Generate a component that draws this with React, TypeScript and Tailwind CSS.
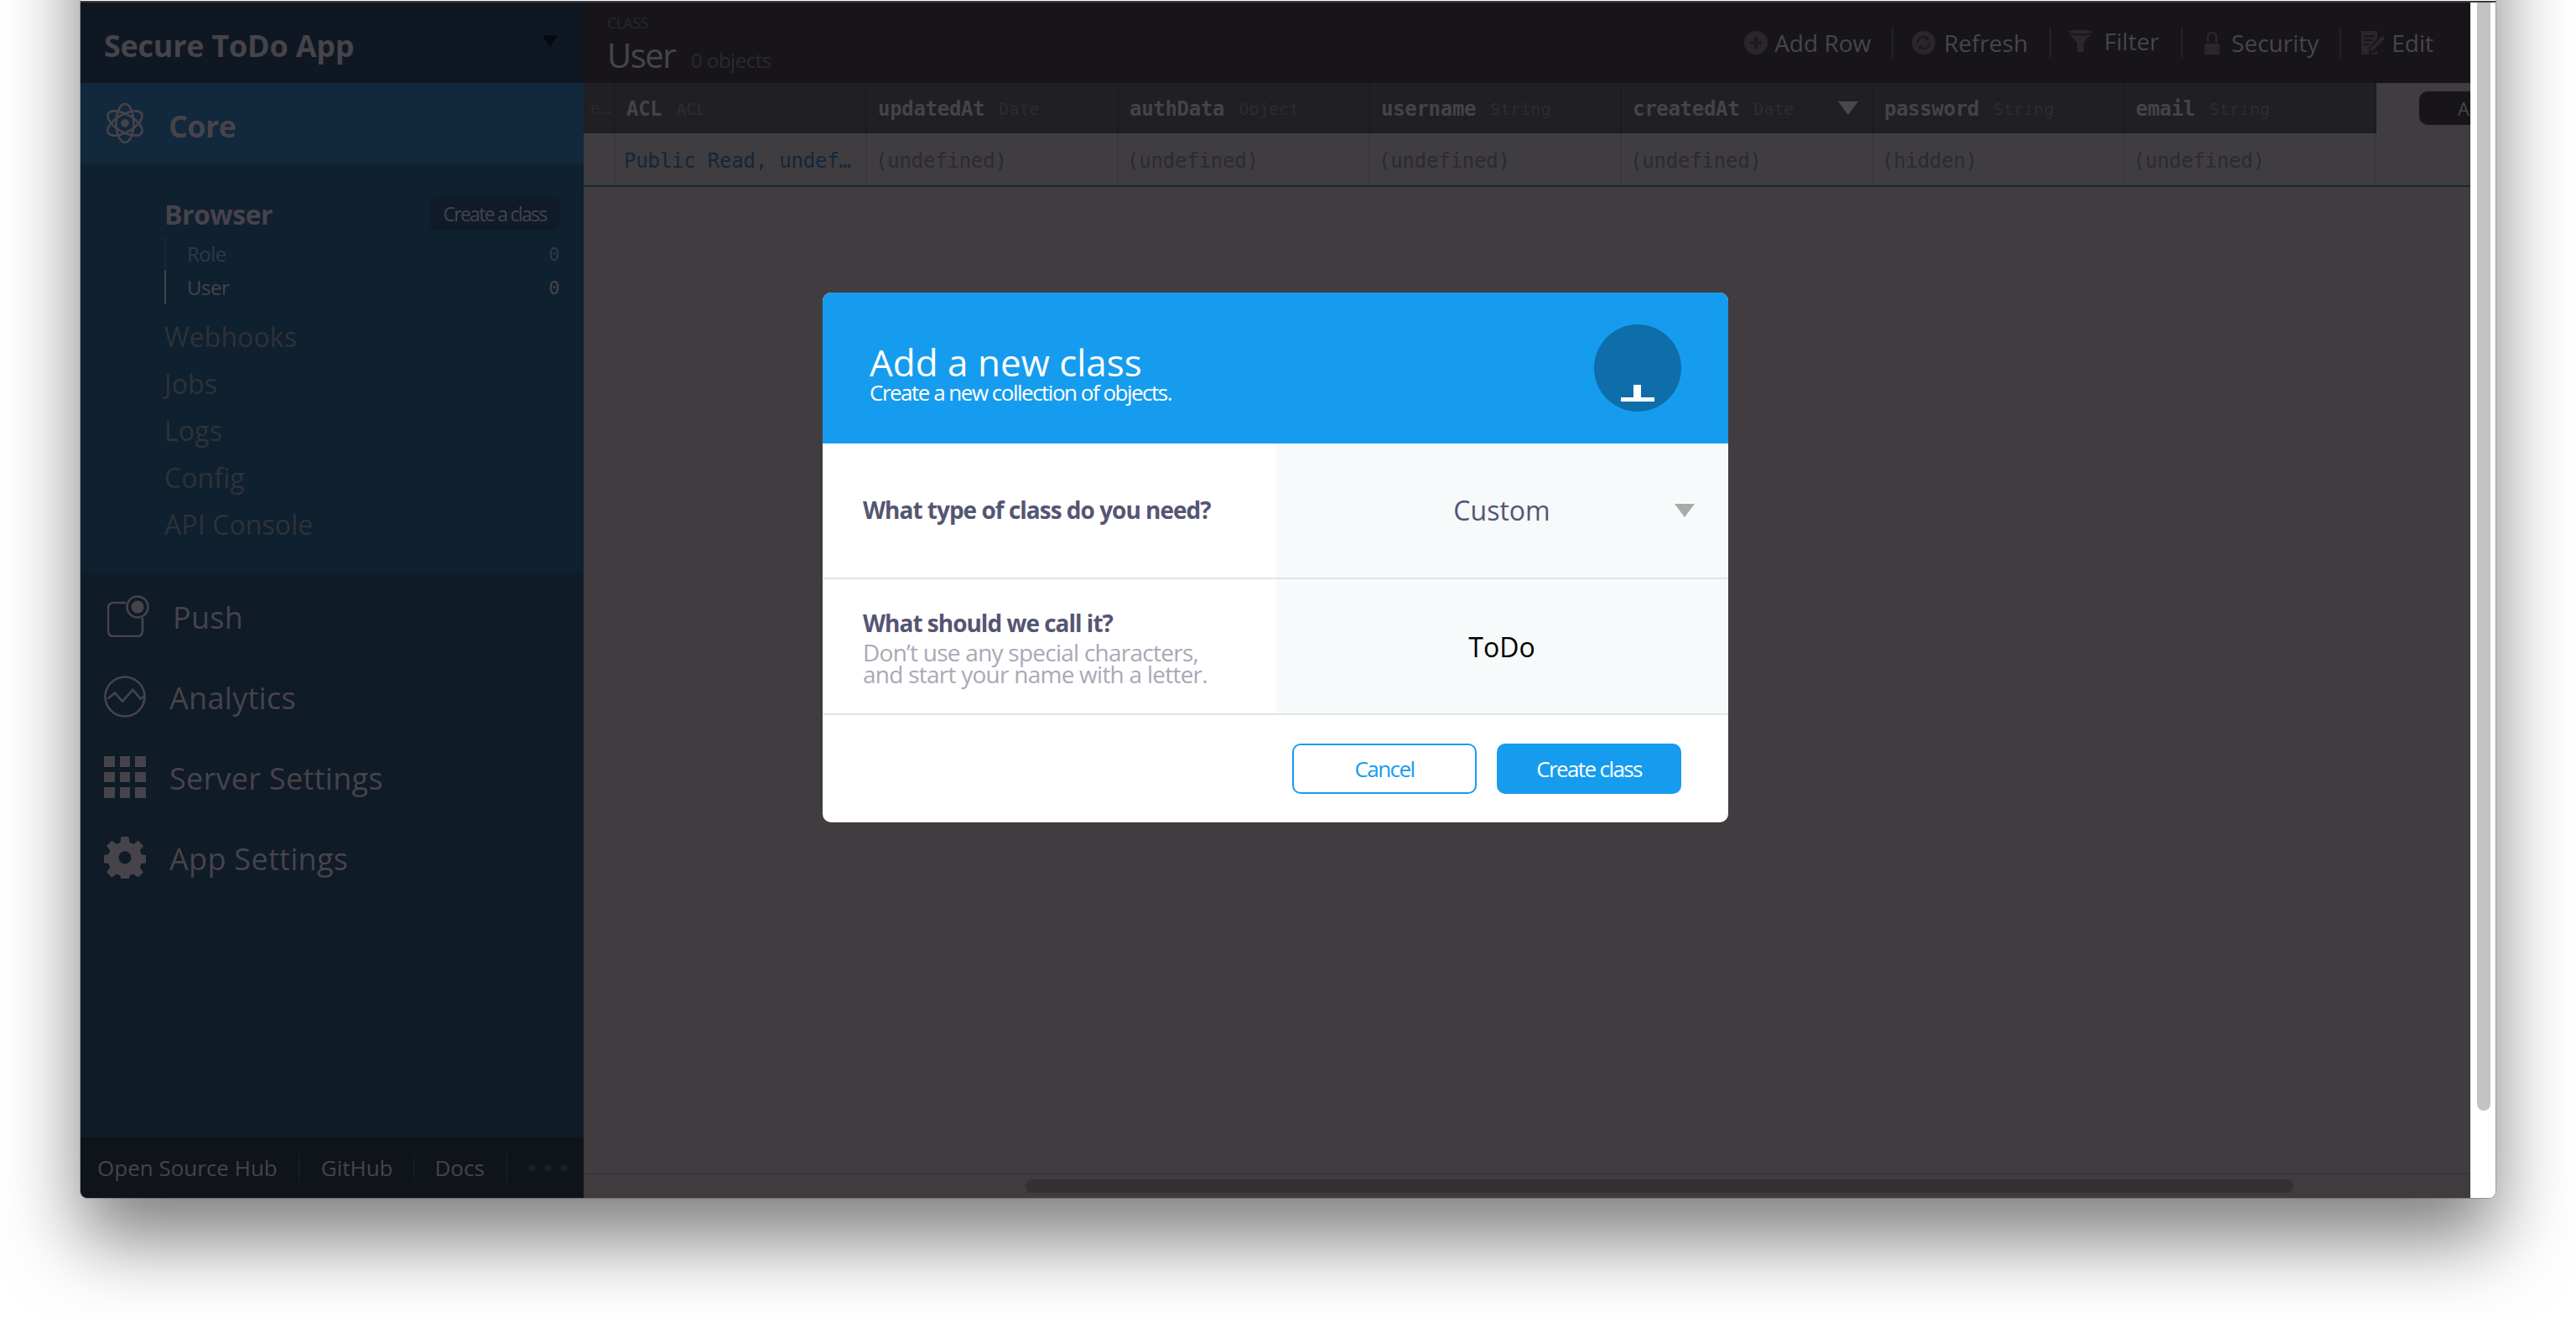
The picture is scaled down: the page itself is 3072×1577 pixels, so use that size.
import React from 'react';

const sans = "font-['Open_Sans','Noto_Sans',sans-serif]";
const mono = "font-['DejaVu_Sans_Mono',monospace]";

function CoreIcon() {
  return (
    <svg width="46" height="50" viewBox="0 0 46 50" fill="none" stroke="#47434a" strokeWidth="2.6">
      <ellipse cx="23" cy="25" rx="10.5" ry="23" />
      <ellipse cx="23" cy="25" rx="10.5" ry="23" transform="rotate(60 23 25)" />
      <ellipse cx="23" cy="25" rx="10.5" ry="23" transform="rotate(-60 23 25)" />
      <circle cx="23" cy="25" r="4.8" fill="#47434a" stroke="none" />
    </svg>
  );
}

function PushIcon() {
  return (
    <svg width="50" height="50" viewBox="0 0 50 50" fill="none" stroke="#47434a" strokeWidth="2.6">
      <path d="M22 9H7a6 6 0 0 0-6 6v28a6 6 0 0 0 6 6h29a6 6 0 0 0 6-6V27" />
      <circle cx="36" cy="14" r="12.5" />
      <circle cx="36" cy="14" r="7.5" fill="#47434a" stroke="none" />
    </svg>
  );
}

function AnalyticsIcon() {
  return (
    <svg width="50" height="50" viewBox="0 0 50 50" fill="none" stroke="#47434a" strokeWidth="2.6">
      <circle cx="25" cy="25" r="23.5" />
      <path d="M4.600 27.500l8.300-6.900 9.100 10 12.400-13.800 9.200 10.700 5.400-3.500" />
    </svg>
  );
}

function GridIcon() {
  return (
    <div className="grid grid-cols-3 gap-[6px] w-[50px] h-[50px]">
      {Array.from({ length: 9 }).map((_, i) => (
        <div key={i} className="bg-[#47434a]" />
      ))}
    </div>
  );
}

function GearIcon() {
  return (
    <svg width="50" height="50" viewBox="0 0 50 50" fill="#47434a">
      <path
        fillRule="evenodd"
        d="M20.5 0h9l1 7 4.5 1.900 5.700-4.200 6.300 6.300-4.200 5.700 1.900 4.500 6.800 1v9l-6.800 1-1.900 4.500 4.200 5.700-6.300 6.300-5.700-4.200-4.500 1.900-1 6.800h-9l-1-6.800-4.500-1.900-5.700 4.200-6.300-6.300 4.200-5.700-1.900-4.500-6.800-1v-9l6.800-1 1.900-4.500-4.200-5.700 6.300-6.300 5.700 4.200 4.500-1.900zM25 17.500a7.500 7.500 0 1 0 0 15 7.500 7.500 0 0 0 0-15z"
      />
    </svg>
  );
}

function PlusIcon() {
  return (
    <svg width="28" height="28" viewBox="0 0 28 28">
      <circle cx="14" cy="14" r="14" fill="#29272c" />
      <path d="M12 7v5H7v4h5v5h4v-5h5v-4h-5V7z" fill="#1c1a1f" />
    </svg>
  );
}

function RefreshIcon() {
  return (
    <svg width="28" height="28" viewBox="0 0 28 28">
      <circle cx="14" cy="14" r="14" fill="#29272c" />
      <path d="M7 14a7 7 0 0 1 12-5M21 14a7 7 0 0 1-12 5" fill="none" stroke="#1c1a1f" strokeWidth="2.5" />
      <path d="M20 5v6h-6zM8 23v-6h6z" fill="#1c1a1f" />
    </svg>
  );
}

function FilterIcon() {
  return (
    <svg width="28" height="28" viewBox="0 0 28 28" fill="#29272c">
      <ellipse cx="14" cy="3" rx="14" ry="2.500" />
      <path d="M1 5.500c4 2 22 2 26 0L18 16v10c0 2-8 2-8 0V16z" />
    </svg>
  );
}

function LockIcon() {
  return (
    <svg width="18" height="28" viewBox="0 0 18 28" fill="#29272c">
      <path d="M0 15h18v13H0z" />
      <path d="M4 14V7a5 5 0 0 1 10 0v7" fill="none" stroke="#29272c" strokeWidth="2.500" />
    </svg>
  );
}

function EditIcon() {
  return (
    <svg width="28" height="28" viewBox="0 0 28 28" fill="#29272c">
      <path fillRule="evenodd" d="M0 0h19v9L9 20v8H0zM3 5h13v2H3zM3 10h10v2H3zM3 15h6v2H3z" />
      <path d="M25 6l3 3-14 14-4 1 1-4zM19 24v4h-9z" />
    </svg>
  );
}

const columns = [
  { name: 'ACL', type: 'ACL', value: 'Public Read, undef…', valueClass: 'text-[#13273a]' },
  { name: 'updatedAt', type: 'Date', value: '(undefined)' },
  { name: 'authData', type: 'Object', value: '(undefined)' },
  { name: 'username', type: 'String', value: '(undefined)' },
  { name: 'createdAt', type: 'Date', value: '(undefined)', sorted: true },
  { name: 'password', type: 'String', value: '(hidden)' },
  { name: 'email', type: 'String', value: '(undefined)' },
];

function Sidebar() {
  return (
    <aside className={`w-[600px] shrink-0 flex flex-col bg-[#0f1b27] ${sans}`}>
      <div className="h-[96px] bg-[#0f1822] flex items-center justify-between pl-[28px] pr-[31px]">
        <span className="mt-[8px] text-[36px] leading-none font-bold text-[#47434a] tracking-[-0.25px]">Secure ToDo App</span>
        <div className="w-0 h-0 border-x-[9px] border-x-transparent border-t-[14px] border-t-[#08090c] mb-[4px]" />
      </div>
      <div className="h-[96px] bg-[#12283c] flex items-center pl-[30px]">
        <CoreIcon />
        <span className="ml-[29px] mt-[8px] text-[36px] leading-none font-bold text-[#47434a] tracking-[-0.6px]">Core</span>
      </div>
      <div className="h-[489px] bg-[#0f2030] pl-[100px] pr-[29px] pt-[40px]">
        <div className="flex items-center justify-between h-[40px]">
          <span className="mt-[2px] text-[32px] leading-none font-bold text-[#47434a] tracking-[-0.5px]">Browser</span>
          <span className="w-[154px] h-[40px] rounded-[6px] bg-[#0f1b28] flex items-center justify-center text-[23px] text-[#47434a] tracking-[-1.7px]">
            Create a class
          </span>
        </div>
        <div className="mt-[8px] border-l-2 border-[#1c2a38] pl-[25px] h-[40px] flex items-center justify-between text-[24px] text-[#2f3a46] tracking-[-0.5px]">
          <span>Role</span>
          <span className={mono + ' text-[22px]'}>0</span>
        </div>
        <div className="border-l-2 border-[#47434a] pl-[25px] h-[40px] flex items-center justify-between text-[24px] text-[#47434a] tracking-[-0.5px]">
          <span>User</span>
          <span className={mono + ' text-[22px]'}>0</span>
        </div>
        <div className="mt-[11px] flex flex-col items-start text-[32px] leading-[56px] text-[#2e3238] tracking-[0.1px]">
          <span>Webhooks</span>
          <span>Jobs</span>
          <span>Logs</span>
          <span>Config</span>
          <span>API Console</span>
        </div>
      </div>
      <div className="flex-1 flex flex-col pl-[28px] pt-[26px] gap-[46px] text-[36px] leading-[50px] text-[#47434a] tracking-[0.3px]">
        <div className="flex items-center h-[50px]">
          <div className="ml-[4px] mr-[28px]"><PushIcon /></div>
          <span className="mt-[4px]">Push</span>
        </div>
        <div className="flex items-center h-[50px]">
          <div className="mr-[28px]"><AnalyticsIcon /></div>
          <span className="mt-[4px]">Analytics</span>
        </div>
        <div className="flex items-center h-[50px]">
          <div className="mr-[28px]"><GridIcon /></div>
          <span className="mt-[4px]">Server Settings</span>
        </div>
        <div className="flex items-center h-[50px]">
          <div className="mr-[28px]"><GearIcon /></div>
          <span className="mt-[4px]">App Settings</span>
        </div>
      </div>
      <div className="h-[72px] bg-[#0f141a] flex items-center pl-[20px] text-[26px] text-[#47434a] rounded-bl-[8px]">
        <span>Open Source Hub</span>
        <div className="w-[2px] h-[35px] bg-[#161c24] mx-[25px]" />
        <span>GitHub</span>
        <div className="w-[2px] h-[35px] bg-[#161c24] mx-[24px]" />
        <span>Docs</span>
        <div className="w-[2px] h-[35px] bg-[#161c24] mx-[25px]" />
        <div className="flex gap-[10px]">
          <span className="w-[9px] h-[9px] rounded-full bg-[#13202e]" />
          <span className="w-[9px] h-[9px] rounded-full bg-[#13202e]" />
          <span className="w-[9px] h-[9px] rounded-full bg-[#13202e]" />
        </div>
      </div>
    </aside>
  );
}

function Toolbar() {
  const sep = <div className="w-[2px] h-[36px] bg-[#242228]" />;
  return (
    <div className="flex items-center text-[28px] text-[#47454b] pr-[44px]">
      <div className="flex items-center gap-[8px] pr-[25px]"><PlusIcon /><span>Add Row</span></div>
      {sep}
      <div className="flex items-center gap-[10px] pl-[22px] pr-[26px]"><RefreshIcon /><span>Refresh</span></div>
      {sep}
      <div className="flex items-center gap-[14px] pl-[21px] pr-[26px] mb-[4px]"><FilterIcon /><span>Filter</span></div>
      {sep}
      <div className="flex items-center gap-[14px] pl-[26px] pr-[25px]"><LockIcon /><span>Security</span></div>
      {sep}
      <div className="flex items-center gap-[8px] pl-[24px]"><EditIcon /><span>Edit</span></div>
    </div>
  );
}

function Main() {
  return (
    <main className="w-[2250px] shrink-0 flex flex-col bg-[#413c40] overflow-hidden">
      <div className={`h-[96px] bg-[#17151a] flex items-center justify-between pl-[28px] ${sans}`}>
        <div className="flex flex-col pt-[4px]">
          <span className="text-[18px] leading-[24px] text-[#2a282e] tracking-[-0.6px]">CLASS</span>
          <div className="flex items-baseline gap-[19px] mt-[2px]">
            <span className="text-[40px] leading-[50px] text-[#47454b] tracking-[-1.5px]">User</span>
            <span className="text-[24px] text-[#2b292f] tracking-[-0.5px]">0 objects</span>
          </div>
        </div>
        <Toolbar />
      </div>
      <div className={`flex ${mono}`}>
        <div className="w-[38px] shrink-0 flex flex-col">
          <div className="h-[60px] bg-[#201f24] border-r-2 border-[#1c1b20] flex items-center justify-end pr-[4px] text-[20px] text-[#2b292f]">e…</div>
          <div className="h-[62px] bg-[#3f3d40] border-r-2 border-[#3a383c]" />
        </div>
        {columns.map((c) => (
          <div key={c.name} className="w-[300px] shrink-0 flex flex-col">
            <div className="relative h-[60px] bg-[#201f24] border-r-2 border-[#1c1b20] flex items-center pl-[13px] gap-[17px] pt-[2px]">
              <span className="text-[24px] font-bold text-[#454349] tracking-[-0.3px]">{c.name}</span>
              <span className="text-[20px] text-[#2e2c32]">{c.type}</span>
              {c.sorted && (
                <div className="absolute right-[16px] top-[22px] w-0 h-0 border-x-[12px] border-x-transparent border-t-[16px] border-t-[#4a484e]" />
              )}
            </div>
            <div className={`h-[62px] bg-[#3f3d40] border-r-2 border-[#3a383c] flex items-center pl-[10px] pt-[4px] text-[24px] tracking-[-0.2px] whitespace-nowrap ${c.valueClass ?? 'text-[#2c2a30]'}`}>
              {c.value}
            </div>
          </div>
        ))}
        <div className="flex-1 bg-[#3f3d40] pl-[51px] pt-[10px]">
          <div className={`w-[200px] h-[40px] rounded-[10px] bg-[#17151a] flex items-center pl-[46px] text-[22px] text-[#47454b] ${sans}`}>A</div>
        </div>
      </div>
      <div className="h-[2px] bg-[#13293a]" />
      <div className="flex-1" />
      <div className="h-[28px] mb-[2px] bg-[#3f3b3e] border-t-2 border-[#3a363a] pl-[527px] pt-[6px] flex items-start">
        <div className="w-[1512px] h-[16px] rounded-full bg-[#343034]" />
      </div>
    </main>
  );
}

function Dialog() {
  return (
    <div className={`absolute left-[981px] top-[349px] w-[1080px] h-[632px] rounded-[10px] overflow-hidden bg-white flex flex-col ${sans}`}>
      <div className="h-[180px] bg-[#169cee] flex items-center justify-between pl-[56px] pr-[56px] text-white">
        <div className="flex flex-col mt-[14px]">
          <span className="text-[44px] leading-[44px]">Add a new class</span>
          <span className="mt-[1px] text-[26px] leading-[27px] tracking-[-1.5px]">Create a new collection of objects.</span>
        </div>
        <div className="w-[104px] h-[104px] rounded-full bg-[#0e6eaa]">
          <svg width="104" height="104" viewBox="0 0 104 104" fill="#fff">
            <path d="M47 72h9v15h16v5H32v-5h15z" />
          </svg>
        </div>
      </div>
      <div className="h-[160px] flex">
        <div className="w-[540px] flex items-center pl-[48px] pb-[2px] text-[28px] font-bold text-[#555572] tracking-[-1px]">
          What type of class do you need?
        </div>
        <div className="relative w-[540px] bg-[#f6fafb] flex items-center justify-center text-[32px] text-[#555572]">
          Custom
          <div className="absolute right-[40px] top-[72px] w-0 h-0 border-x-[12px] border-x-transparent border-t-[16px] border-t-[#aaaaaa]" />
        </div>
      </div>
      <div className="h-[2px] bg-[#e3e3ea]" />
      <div className="h-[160px] flex">
        <div className="w-[540px] flex flex-col justify-center pl-[48px]">
          <span className="text-[28px] leading-[36px] font-bold text-[#555572] tracking-[-1px]">What should we call it?</span>
          <span className="mt-[4px] text-[28px] leading-[26px] text-[#a9a9b6] tracking-[-0.75px]">Don’t use any special characters,</span>
          <span className="text-[28px] leading-[26px] text-[#a9a9b6] tracking-[-0.75px]">and start your name with a letter.</span>
        </div>
        <div className="w-[540px] bg-[#f6fafb] flex items-center justify-center pt-[2px] text-[32px] text-black">ToDo</div>
      </div>
      <div className="h-[2px] bg-[#e3e3ea]" />
      <div className="flex-1 flex items-start justify-end gap-[24px] pt-[34px] pr-[56px] text-[26px] tracking-[-1.6px]">
        <div className="w-[220px] h-[60px] rounded-[10px] border-2 border-[#169cee] bg-white text-[#169cee] flex items-center justify-center">Cancel</div>
        <div className="w-[220px] h-[60px] rounded-[10px] bg-[#169cee] text-white flex items-center justify-center">Create class</div>
      </div>
    </div>
  );
}

export default function App() {
  return (
    <div className="relative w-[3072px] h-[1577px] bg-white overflow-hidden pl-[96px]">
      <div className="w-[2880px] h-[1629px] -mt-[200px] pt-[201px] bg-white flex flex-col rounded-b-[8px] shadow-[0_50px_90px_rgba(0,0,0,0.5),0_0_0_1px_rgba(0,0,0,0.2)]">
        <div className="h-[2px] shrink-0 bg-[#3c3a3e]" />
        <div className="flex-1 min-h-0 flex rounded-b-[8px] overflow-hidden">
          <Sidebar />
          <Main />
          <div className="flex-1 bg-white pl-[8px]">
            <div className="w-[16px] h-[1322px] rounded-b-full bg-[#c3c3c3]" />
          </div>
        </div>
      </div>
      <Dialog />
    </div>
  );
}
